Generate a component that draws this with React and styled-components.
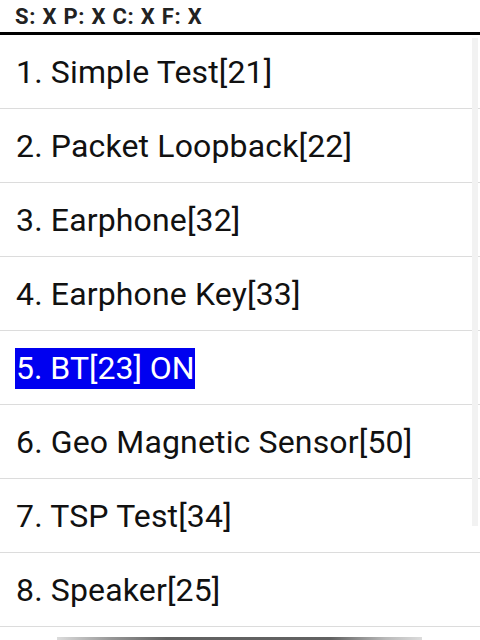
import React from "react";
import styled, { createGlobalStyle } from "styled-components";

const Global = createGlobalStyle`
  html, body { margin: 0; padding: 0; background: #fff; }
  body { font-family: Roboto, "Liberation Sans", sans-serif; }
`;

const Screen = styled.div`
  position: relative;
  width: 480px;
  height: 640px;
  overflow: hidden;
  background: #fff;
`;

const Header = styled.div`
  height: 32px;
  padding-left: 15px;
  display: flex;
  align-items: center;
  font-size: 22px;
  font-weight: 700;
  letter-spacing: 0.75px;
  color: #222;
  border-bottom: 3px solid #000;
  box-sizing: content-box;
`;

const List = styled.div`
  display: flex;
  flex-direction: column;
`;

const Row = styled.div`
  height: 74px;
  border-bottom: 1px solid #dcdcdc;
  display: flex;
  align-items: center;
  padding: 2px 0 0 16px;
  box-sizing: border-box;
  font-size: 32px;
  letter-spacing: 0.15px;
  color: #111;
`;

const Label = styled.span`
  background: ${(p) => (p.$selected ? "#0000f0" : "transparent")};
  color: ${(p) => (p.$selected ? "#fff" : "#111")};
  margin-left: ${(p) => (p.$selected ? "-1px" : "0")};
  padding-left: ${(p) => (p.$selected ? "1px" : "0")};
  letter-spacing: ${(p) => (p.$selected ? "0" : "inherit")};
  line-height: 41px;
`;

const Scrollbar = styled.div`
  position: absolute;
  right: 2px;
  top: 38px;
  width: 6px;
  height: 488px;
  background: #f2f2f2;
`;

const EdgeGlow = styled.div`
  position: absolute;
  left: 57px;
  right: 58px;
  bottom: 0;
  height: 3px;
  background: linear-gradient(
    to right,
    rgba(80, 80, 80, 0.2) 0%,
    rgba(80, 80, 80, 0.6) 15%,
    rgba(70, 70, 70, 0.85) 30%,
    rgba(70, 70, 70, 0.85) 75%,
    rgba(80, 80, 80, 0.4) 90%,
    rgba(80, 80, 80, 0.2) 100%
  );
`;

const items = [
  "1. Simple Test[21]",
  "2. Packet Loopback[22]",
  "3. Earphone[32]",
  "4. Earphone Key[33]",
  "5. BT[23] ON",
  "6. Geo Magnetic Sensor[50]",
  "7. TSP Test[34]",
  "8. Speaker[25]",
];

export default function App() {
  return (
    <Screen>
      <Global />
      <Header>S: X P: X C: X F: X</Header>
      <List>
        {items.map((t, i) => (
          <Row key={t}>
            <Label $selected={i === 4}>{t}</Label>
          </Row>
        ))}
      </List>
      <Scrollbar />
      <EdgeGlow />
    </Screen>
  );
}
